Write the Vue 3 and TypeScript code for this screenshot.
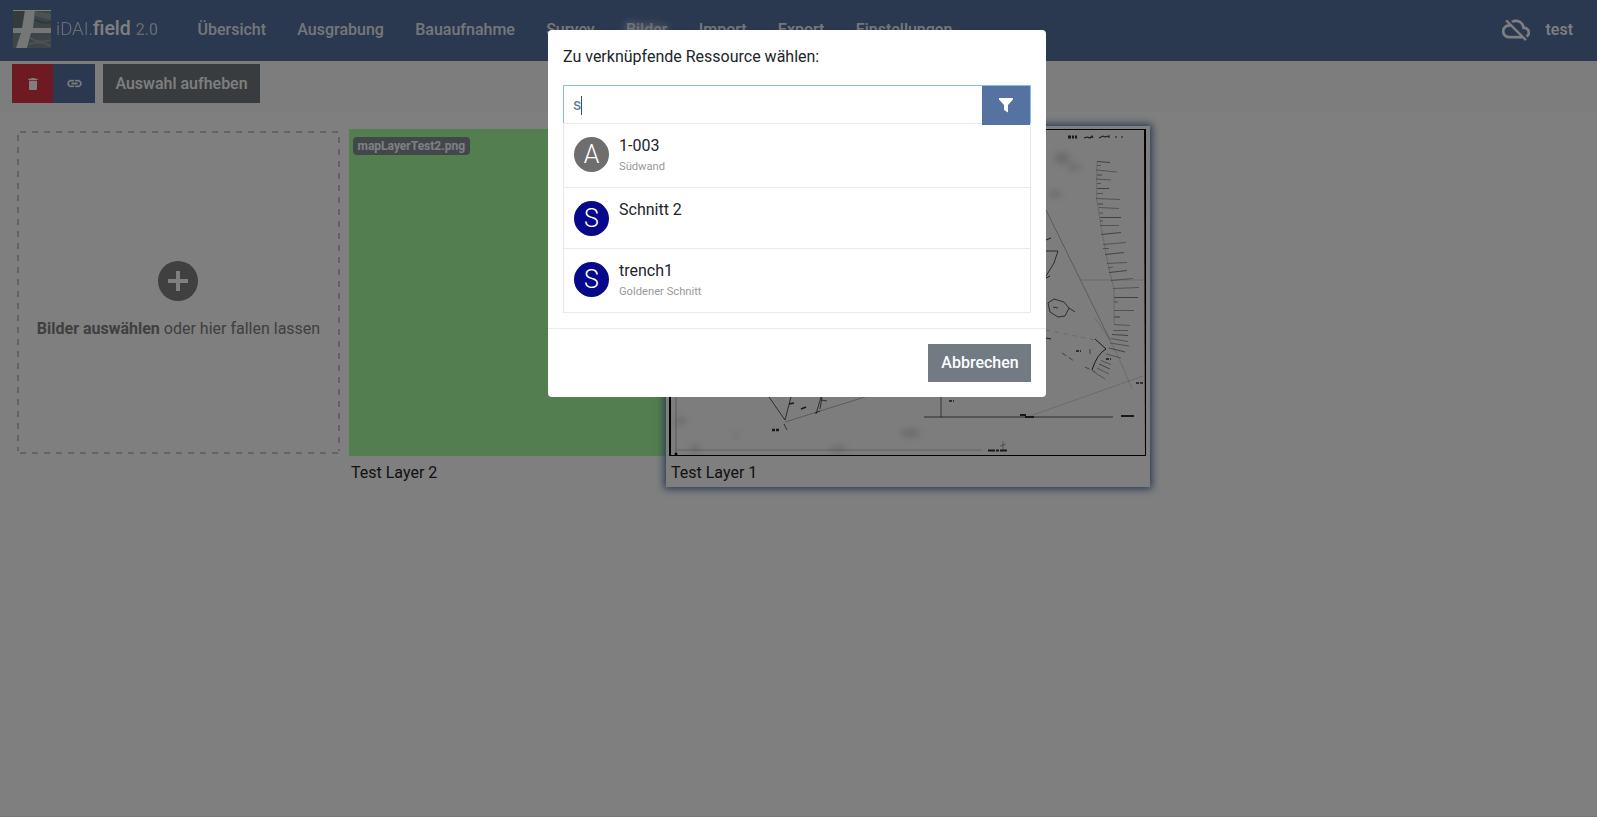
<script setup lang="ts">
import { ref } from 'vue'

interface Resource {
  letter: string
  color: string
  name: string
  description?: string
}

const navItems: string[] = ['Übersicht', 'Ausgrabung', 'Bauaufnahme', 'Survey', 'Bilder', 'Import', 'Export', 'Einstellungen']
const activeItem = 'Bilder'
const query = ref('s')

const resources: Resource[] = [
  { letter: 'A', color: '#6e6e6e', name: '1-003', description: 'Südwand' },
  { letter: 'S', color: '#08088a', name: 'Schnitt 2' },
  { letter: 'S', color: '#08088a', name: 'trench1', description: 'Goldener Schnitt' },
]

// Slope hatching of the trench edge: x, y, length, vertical drift
const hatches: number[][] = [
  [1097, 161.5, 13, 1], [1097, 165.5, 4, 0], [1096, 170, 21, 2], [1097, 175, 5, 0], [1096, 179, 15, 1],
  [1097, 183.5, 4, 0], [1097, 188.5, 12, 0], [1097, 193.5, 6, 0], [1096, 198.5, 24, 1], [1098, 204, 5, 0],
  [1099, 207.5, 20, 1], [1099, 213, 4, 0], [1100, 217.5, 21, 0], [1100, 221, 3, 0], [1100, 225.5, 19, 0],
  [1101, 234.5, 20, -2], [1103, 244.5, 23, -2], [1103, 248.5, 6, 0], [1105, 254.5, 19, -2], [1107, 263.5, 20, -1],
  [1108, 268, 5, -1], [1109, 272.5, 18, -2], [1111, 280.5, 22, -2], [1113, 288.5, 26, -1], [1114, 297.5, 24, 0],
  [1114, 302, 4, 0], [1114, 310.5, 20, 0], [1114, 317, 6, 0], [1114, 324.5, 16, 1], [1113, 330.5, 15, 0],
  [1112, 334.5, 16, 1], [1111, 338.5, 17, 3], [1110, 343, 19, 3], [1109, 348, 16, 4], [1106, 354, 15, 4],
  [1101, 360.5, 10, 4], [1099, 364, 11, 5], [1097, 368, 12, 6], [1094, 372, 11, 7],
]
</script>

<template>
  <div class="app">
    <header class="navbar">
      <svg class="logo" viewBox="0 0 38 38">
        <rect width="38" height="38" fill="#798a90" />
        <path d="M0 0H14L9 19H0Z" fill="#66777d" />
        <path d="M22 1l16 3v6l-16-4z" fill="#97a5a7" />
        <path d="M22 10q8 4 16 2" stroke="#5f7176" stroke-width="2" fill="none" />
        <path d="M17 28q10 6 21 2M16 34q11-4 22 2" stroke="#94a2a5" stroke-width="2" fill="none" />
        <path d="M0 25h10l-5 13H0z" fill="#7e8d91" />
        <path d="M12 0H22L20 18H38V23H18L14 38H3L8 23H0V18H9Z" fill="#f4f4f4" opacity=".92" />
        <path d="M0 .5H38" stroke="#fff" />
      </svg>
      <div class="brand"><span class="thin">iDAI.</span><span class="field">field</span><span class="version">2.0</span></div>
      <nav>
        <a v-for="item in navItems" :key="item" :class="{ active: item === activeItem }">{{ item }}</a>
      </nav>
      <svg class="cloud" viewBox="0 0 24 24">
        <path fill="#fff" stroke="#fff" stroke-width=".35" d="M19.35 10.04C18.67 6.59 15.64 4 12 4c-1.48 0-2.85.43-4.01 1.17l1.46 1.46C10.21 6.23 11.08 6 12 6c3.04 0 5.5 2.46 5.5 5.5v.5H19c1.66 0 3 1.34 3 3 0 1.13-.64 2.11-1.56 2.62l1.45 1.45C23.16 18.16 24 16.68 24 15c0-2.64-2.05-4.78-4.65-4.96zM3 5.27l2.75 2.74C2.56 8.15 0 10.77 0 14c0 3.31 2.69 6 6 6h11.73l2 2L21 20.73 4.27 4 3 5.27zM7.73 10l8 8H6c-2.21 0-4-1.79-4-4s1.79-4 4-4h1.73z" />
      </svg>
      <span class="user">test</span>
    </header>

    <div class="toolbar">
      <button class="danger">
        <svg viewBox="0 0 24 24" width="16" height="16"><path fill="#fff" d="M6 19c0 1.1.9 2 2 2h8c1.1 0 2-.9 2-2V7H6v12zM19 4h-3.500l-1-1h-5l-1 1H5v2h14V4z" /></svg>
      </button>
      <button class="primary">
        <svg viewBox="0 0 24 24" width="17" height="17"><path fill="#fff" stroke="#fff" stroke-width=".4" d="M3.900 12c0-1.710 1.390-3.100 3.100-3.100h4V7H7c-2.760 0-5 2.240-5 5s2.240 5 5 5h4v-1.900H7c-1.710 0-3.100-1.390-3.100-3.100zM8 13h8v-2H8v2zm9-6h-4v1.900h4c1.710 0 3.100 1.390 3.100 3.100s-1.390 3.100-3.100 3.100h-4V17h4c2.760 0 5-2.240 5-5s-2.240-5-5-5z" /></svg>
      </button>
      <button class="deselect">Auswahl aufheben</button>
    </div>

    <main class="grid">
      <section class="drop">
        <svg class="dashes" viewBox="0 0 323 323">
          <path d="M3 1H322" /><path d="M322 6V320" /><path d="M3 322H322" /><path d="M1 4V320" />
        </svg>
        <svg class="plus" viewBox="0 0 40 40">
          <circle cx="20" cy="20" r="20" fill="#808080" />
          <path d="M20 10V30M10 20H30" stroke="#fff" stroke-width="4" />
        </svg>
        <p><b>Bilder auswählen</b> oder hier fallen lassen</p>
      </section>

      <section class="card layer2">
        <div class="green"><span class="badge">mapLayerTest2.png</span></div>
        <div class="caption">Test Layer 2</div>
      </section>

      <section class="card layer1">
        <svg class="plan" viewBox="669 129 477 327">
          <defs>
            <filter id="smudge"><feGaussianBlur stdDeviation="3" /></filter>
            <filter id="ink" x="-5%" y="-5%" width="110%" height="110%"><feGaussianBlur stdDeviation=".4" /></filter>
          </defs>
          <rect x="669" y="129" width="477" height="327" fill="#fafafa" />
          <g fill="#888" opacity=".3" filter="url(#smudge)">
            <ellipse cx="1062" cy="158" rx="8" ry="6" /><ellipse cx="1074" cy="167" rx="7" ry="3" />
            <ellipse cx="1055" cy="194" rx="7" ry="3" /><ellipse cx="681" cy="421" rx="5" ry="4" />
            <ellipse cx="736" cy="435" rx="3" ry="2" /><ellipse cx="838" cy="449" rx="9" ry="3" />
            <ellipse cx="695" cy="449" rx="5" ry="4" /><ellipse cx="910" cy="433" rx="10" ry="4" />
          </g>
          <g filter="url(#ink)">
            <g fill="none" stroke="#999" stroke-width=".7">
              <path d="M1046 210L1110 340" /><path d="M1080 280H1143" opacity=".5" />
              <path d="M1030 416L1143 376" opacity=".5" />
              <path d="M785 422L865 397" /><path d="M1095 318L1110 340L1122 365L1132 389" opacity=".5" />
              <path d="M1046 330L1095 340" stroke-dasharray="4 5" opacity=".6" />
              <path d="M676 450H982" opacity=".8" /><path d="M676 390V454" />
            </g>
            <g fill="none" stroke="#333" stroke-width="1">
              <path d="M769 397L785 420L791 397M784 424l3 6" stroke-width=".8" />
              <path d="M816 414l5-17M820 409l2-12M815 413l5-2M821 400l6 1" stroke-width=".8" />
              <path d="M789 404l5-1M801 409l5-2" stroke-width="1.500" />
              <path d="M1046 251l12 0-4 12-8 13" stroke-width=".8" />
              <path d="M1048 303l6-4 10 3 5 6-4 8-7 1-8-5zM1053 307l5 1M1069 308l6 4" stroke-width=".8" />
              <path d="M1046 240l5-2M1046 278l4-2M1046 338l5 1" />
              <path d="M1095 339l11 10q-9 5-14 21" stroke-width="1" />
              <path d="M1062 353l12 8M1085 367l10 5M1090 349v6" stroke-width=".6" stroke-dasharray="5 3" />
              <path d="M924 417H1113" stroke-width=".8" /><path d="M941 397v20" stroke-width=".7" />
              <path d="M1121 416h13M1020 415h6M1025 417h9" stroke-width="1.800" />
              <path d="M988 450.500h20" stroke-width="2.200" stroke-dasharray="7 1 3 1" /><path d="M1003 441v9M1000 446l6-2" stroke-width=".4" />
              <path d="M772 430h7" stroke-width="2.500" stroke-dasharray="3 1" />
              <path d="M1136 383h7M1076 351h5M1106 359h5M949 401h5" stroke-width="1.300" stroke-dasharray="3 1" />
              <path d="M1068 137h9" stroke-width="2.800" stroke-dasharray="3 1 2 1" />
              <path d="M1084 138l3-1 3 1 2-2 1 2M1099 138l4-2 2 1 4-1v2M1115 137h2M1121 137h2" stroke-width="1.100" />
            </g>
            <path d="M1097 161L1096.500 198L1102 232L1108 264L1114 290L1114 324" fill="none" stroke="#999" stroke-width=".4" />
            <path v-for="(h, i) in hatches" :key="i" :d="`M${h[0]} ${h[1]}l${h[2]} ${h[3]}`" stroke="#777" :stroke-width="i % 3 === 0 ? 0.9 : 0.65" />
          </g>
          <path d="M669 129.500H1146M669 455.500H1146" stroke="#000" stroke-width="1" />
          <path d="M670 129V456" stroke="#000" stroke-width="2" />
          <path d="M1144 129H1146V456H1145Z" fill="#000" />
          <circle cx="676" cy="454" r="1.500" />
        </svg>
        <div class="caption">Test Layer 1</div>
      </section>
    </main>
    <div class="bottom-line"></div>
  </div>

  <div class="backdrop">
    <div class="modal">
      <div class="body">
        <h5>Zu verknüpfende Ressource wählen:</h5>
        <div class="search">
          <div class="input">{{ query }}<i class="caret"></i></div>
          <button class="filter">
            <svg viewBox="0 0 14 15" width="14" height="15"><path d="M0 0H14V1.500L9 7V14.500L5 12V7L0 1.500Z" fill="#fff" /></svg>
          </button>
        </div>
        <ul>
          <li v-for="r in resources" :key="r.name">
            <span class="icon" :style="{ background: r.color }">{{ r.letter }}</span>
            <div class="info">
              <div class="name">{{ r.name }}</div>
              <div v-if="r.description" class="desc">{{ r.description }}</div>
            </div>
          </li>
        </ul>
      </div>
      <footer><button class="cancel">Abbrechen</button></footer>
    </div>
  </div>
</template>

<style>
html, body { margin: 0; overflow: hidden; }
</style>

<style scoped>
* { box-sizing: border-box; }
.app, .backdrop { font-family: Roboto, sans-serif; font-size: 16px; line-height: 24px; color: #212529; }
.app { height: 817px; background: #fff; display: flex; flex-direction: column; }
button { border: 0; padding: 0; font: 500 16px/24px Roboto, sans-serif; color: #fff; display: flex; align-items: center; justify-content: center; }

.navbar { height: 61px; flex: none; background: #5572a1; display: flex; align-items: center; padding: 0 24px 3px 13px; color: #fff; }
.logo { width: 38px; height: 38px; }
.brand { width: 146.500px; padding-left: 5px; font-size: 19.500px; white-space: nowrap; }
.thin { font-weight: 300; font-size: 18.500px; opacity: .75; }
.field { font-weight: 500; }
.version { font-size: 16px; margin-left: 5px; opacity: .7; }
nav { display: flex; gap: 31.250px; flex: 1; padding-top: 2px; font-weight: 500; }
nav a { color: rgba(255, 255, 255, .9); }
nav a.active { text-shadow: 0 0 8px #fff; color: rgba(255, 255, 255, .75); }
.cloud { width: 28px; height: 28px; margin-right: 16px; }
.user { font-weight: 500; padding-top: 2px; }

.toolbar { height: 50px; flex: none; background: #fafafa; display: flex; padding: 3px 12px; }
.toolbar button { height: 39px; }
.danger { width: 41px; background: #dc3545; }
.primary { width: 42px; background: #5572a1; }
.deselect { width: 157px; margin-left: 8px; background: #70797e; }

.grid { flex: 1; display: flex; align-items: flex-start; padding: 15px 0 0 17px; }
.drop { width: 323px; height: 323px; margin-top: 5px; display: grid; grid-template: 187px 136px / 1fr; justify-items: center; color: #808080; }
.dashes { grid-area: 1 / 1 / 3 / 2; width: 323px; height: 323px; }
.dashes path { stroke: #c8c8c8; stroke-width: 2; stroke-dasharray: 6 6; fill: none; }
.plus { grid-area: 1 / 1; width: 40px; height: 40px; margin: 130px 1px 0 0; }
.drop p { grid-area: 2 / 1; margin: -1px 0 0; white-space: nowrap; align-self: start; }
.drop b { font-weight: 700; }
.card { height: 361px; padding-top: 3px; flex: none; }
.layer2 { width: 317px; margin-left: 9px; }
.green { height: 327px; background: #a6fc9f; padding: 8px 4px; display: flex; align-items: flex-start; }
.badge { background: #878c97; color: #fff; border-radius: 4px; font-weight: 700; font-size: 12px; line-height: 18px; padding: 0 4.500px; }
.layer1 { width: 484px; background: #fff; box-shadow: 0 0 8px 2px #5572a1; padding-left: 3px; position: relative; }
.plan { width: 477px; height: 327px; display: block; }
.caption { padding: 5px 0 0 2px; }
.bottom-line { height: 1px; background: #f3e8ec; }

.backdrop { position: fixed; inset: 0; background: rgba(0, 0, 0, .5); display: flex; justify-content: center; align-items: flex-start; padding-top: 30px; }
.modal { width: 498px; height: 367px; margin-right: 3px; background: #fff; border-radius: 4px; display: flex; flex-direction: column; }
.body { padding: 15px 15px 0; height: 298px; }
h5 { margin: 0; font-size: 16px; font-weight: 400; line-height: 24px; }
.search { margin-top: 16px; height: 38px; border: 1px solid #80bdff; border-bottom: 0; display: flex; align-items: flex-start; }
.input { flex: 1; display: flex; align-items: center; height: 38px; padding-left: 9px; color: #5572a1; }
.caret { width: 1px; height: 19px; background: #34507d; }
.filter { width: 48px; height: 39px; background: #5572a1; position: relative; z-index: 1; }
ul { list-style: none; margin: 0; padding: 0; border: 1px solid #e9e9e9; }
li { display: flex; padding: 13px 10px 0; height: 64px; border-bottom: 1px solid #e9e9e9; }
li:nth-child(2) { height: 61px; }
li:last-child { border: 0; height: 63px; }
.icon { width: 35px; height: 35px; border-radius: 50%; color: #fff; font-size: 25px; font-weight: 300; line-height: 35px; text-align: center; margin-right: 10px; }
.info { margin-top: -3px; }
.name { line-height: 24px; }
.desc { font-size: 11.200px; line-height: 18px; color: #999; }
footer { border-top: 1px solid #e9ecef; padding: 15px; display: flex; justify-content: flex-end; }
.cancel { width: 103px; height: 38px; padding-left: 1px; background: #727b84; }
</style>
